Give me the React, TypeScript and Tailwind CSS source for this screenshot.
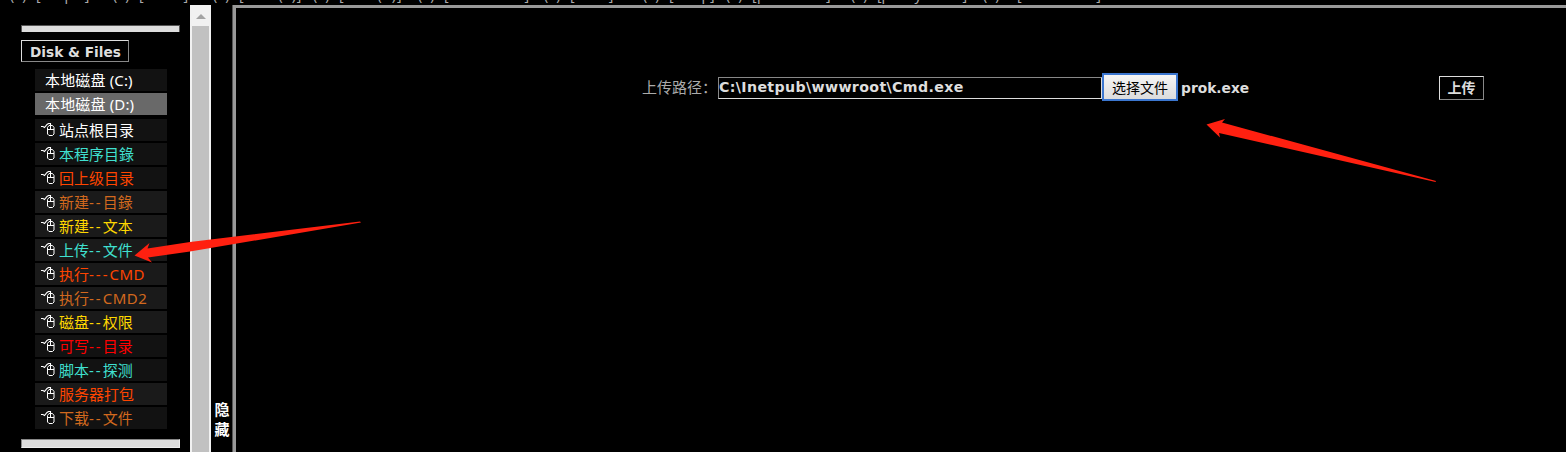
import React from 'react';

const items: [string, string, string][] = [
  ['站点根目录', 'text-white', 'bg-[#121212]'],
  ['本程序目錄', 'text-[#40e0d0]', 'bg-[#121212]'],
  ['回上级目录', 'text-[#ff4500]', 'bg-[#121212]'],
  ['新建--目錄', 'text-[#d2691e]', 'bg-[#1a1a1a]'],
  ['新建--文本', 'text-[#ffd700]', 'bg-[#1a1a1a]'],
  ['上传--文件', 'text-[#40e0d0]', 'bg-[#1a1a1a]'],
  ['执行---CMD', 'text-[#ff4500]', 'bg-[#1a1a1a]'],
  ['执行--CMD2', 'text-[#d2691e]', 'bg-[#1a1a1a]'],
  ['磁盘--权限', 'text-[#ffd700]', 'bg-[#1a1a1a]'],
  ['可写--目录', 'text-[#ff0000]', 'bg-[#121212]'],
  ['脚本--探测', 'text-[#40e0d0]', 'bg-[#121212]'],
  ['服务器打包', 'text-[#ff4500]', 'bg-[#1a1a1a]'],
  ['下载--文件', 'text-[#d2691e]', 'bg-[#121212]'],
];

// Menu entries of the top bar, with the column width each one takes.
const menu: [string, string][] = [
  ['(+)', 'w-[26px]'], ['[Scripts]', 'w-[77px]'],
  ['(+)', 'w-[26px]'], ['[Home]', 'w-[74px]'],
  ['(+)', 'w-[26px]'], ['[Data(x)]', 'w-[74px] tracking-[0.8px]'],
  ['(+)', 'w-[26px]'], ['[Disk(x)]', 'w-[79px] tracking-[1.2px]'],
  ['(+)', 'w-[26px]'], ['[Windows03]', 'w-[100px]'],
  ['(+)', 'w-[26px]'], ['[Tools]', 'w-[73px]'],
  ['(+)', 'w-[26px]'], ['[Temp]', 'w-[57px]'],
  ['(+)', 'w-[26px]'], ['[phosts.ini]', 'w-[99px] tracking-[0.5px]'],
  ['(+)', 'w-[26px]'], ['[pcAnywhere]', 'w-[106px]'],
  ['(+)', 'w-[34px]'], ['[Autostart]', 'w-[90px] tracking-[1.3px]'],
];

function Mouse() {
  return (
    <svg width="14" height="16" viewBox="0 0 14 16" fill="none" stroke="#fff" className="shrink-0">
      <path d="M0 4.5 H2 L3.5 5.5 L6 2.5 L7.500 1.5 H9.5 V3.5" strokeWidth="1.1" />
      <path d="M6.5 5.500 L8 3.5 H11.500 L13 5.500 V12 L11.500 13.5 H8 L6.5 12 Z M6.5 7.5 H13 M9.5 3.5 V7.5" strokeWidth="1" />
    </svg>
  );
}

function Label({ text }: { text: string }) {
  return (
    <span>
      {text.split(/(-+)/).map((part, i) => (
        <span key={i} className={part.startsWith('-') ? 'tracking-[2px]' : part.startsWith('CMD') ? 'tracking-[0.5px]' : ''}>{part}</span>
      ))}
    </span>
  );
}

export default function App() {
  return (
    <div className="relative flex h-[452px] w-[1566px] flex-col overflow-hidden bg-black font-['Noto_Sans','Noto_Sans_CJK_SC',sans-serif] text-[15px]">
      <div className="flex h-[5px] shrink-0 items-end overflow-hidden pl-[10px] text-[14px] leading-[20px] whitespace-nowrap text-[#aaa]">
        {menu.map(([d, w], i) => (
          <span key={i} className={`shrink-0 ${w}`}>{d}</span>
        ))}
      </div>
      <div className="flex h-[447px]">
        <aside className="w-[190px] shrink-0 pt-[20px] pl-[21px]">
          <div className="h-[7px] w-[159px] border-t border-r border-l border-[#555] bg-[#ddd]" />
          <div className="mt-[8px] flex h-[22px] w-[108px] items-center border border-t-[#ddd] border-r-[#888] border-b-[#888] border-l-[#ddd] pt-[2px] pl-[8px] font-['DejaVu_Sans'] text-[13.7px] font-bold whitespace-nowrap text-[#ddd]">
            Disk &amp; Files
          </div>
          <div className="mt-[7px] ml-[14px] flex w-[132px] flex-col gap-[2px] text-white">
            <div className="flex h-[22px] items-center bg-[#121212] pl-[10px] tracking-[0.15px]">本地磁盘 (C:)</div>
            <div className="flex h-[22px] items-center bg-[#696969] pl-[10px] tracking-[0.15px]">本地磁盘 (D:)</div>
          </div>
          <div className="mt-[4px] ml-[14px] flex w-[132px] flex-col gap-[2px]">
            {items.map(([t, color, bg]) => (
              <div key={t} className={`flex h-[22px] items-center gap-[4px] pl-[6px] whitespace-nowrap ${bg} ${color}`}>
                <Mouse />
                <Label text={t} />
              </div>
            ))}
          </div>
          <div className="mt-[10px] h-[9px] w-[159px] border border-t-[#888] border-r-[#eee] border-b-[#eee] border-l-[#888] bg-[#ddd]" />
        </aside>
        <div className="flex w-[21px] shrink-0 flex-col items-center bg-[#f1f1f1]">
          <div className="flex h-[21px] items-center justify-center pt-px">
            <svg width="10" height="5"><path d="M0 5 L5 0 L10 5Z" fill="#a3a3a3" /></svg>
          </div>
          <div className="w-[17px] flex-1 bg-[#c1c1c1]" />
        </div>
        <div className="flex w-[21px] shrink-0 flex-col items-center pt-[394px] pl-px font-['Noto_Sans_CJK_SC'] leading-[20px] font-bold text-white">
          <span>隐</span><span>藏</span>
        </div>
        <div className="w-px shrink-0 bg-[#555]" />
        <main className="flex-1 border-t-[3px] border-l-[3px] border-[#999] pt-[65px]">
          <div className="flex h-[29px] items-center pl-[406px] font-['DejaVu_Sans','Noto_Sans_CJK_SC',sans-serif] font-bold text-[#ddd]">
            <span className="w-[76px] font-['Noto_Sans_CJK_SC'] font-normal whitespace-nowrap text-[#aaa]">上传路径：</span>
            <div className="flex h-[22px] w-[384px] items-center border border-t-[#888] border-r-[#ddd] border-b-[#ddd] border-l-[#888] pt-px text-[14.2px] tracking-[0.35px] whitespace-nowrap">C:\Inetpub\wwwroot\Cmd.exe</div>
            <button className="mb-px h-[28px] w-[76px] border-2 border-[#3b76cf] bg-linear-to-b from-[#f5f5f5] to-[#dcdcdc] font-['Noto_Sans_CJK_SC'] text-[14px] leading-[22px] font-normal text-black">选择文件</button>
            <span className="ml-[3px] w-[258px] pt-px text-[13.8px]">prok.exe</span>
            <button className="h-[24px] w-[45px] border border-t-[#ddd] border-r-[#888] border-b-[#888] border-l-[#ddd] text-[14px] leading-none">上传</button>
          </div>
        </main>
      </div>
      <svg className="pointer-events-none absolute inset-0" width="1566" height="452" fill="#ff2010">
        <path d="M134.5 255.5 L149.5 243 L147.5 248.5 L190 242 L360 221.5 L361 222.5 L190 251.500 L148 257.500 L152 262.5 Z" />
        <path d="M1206.500 124.5 L1225 119 L1222 122.500 L1436 181 L1435.500 182 L1219 133 L1220 137.500 Z" />
      </svg>
    </div>
  );
}
